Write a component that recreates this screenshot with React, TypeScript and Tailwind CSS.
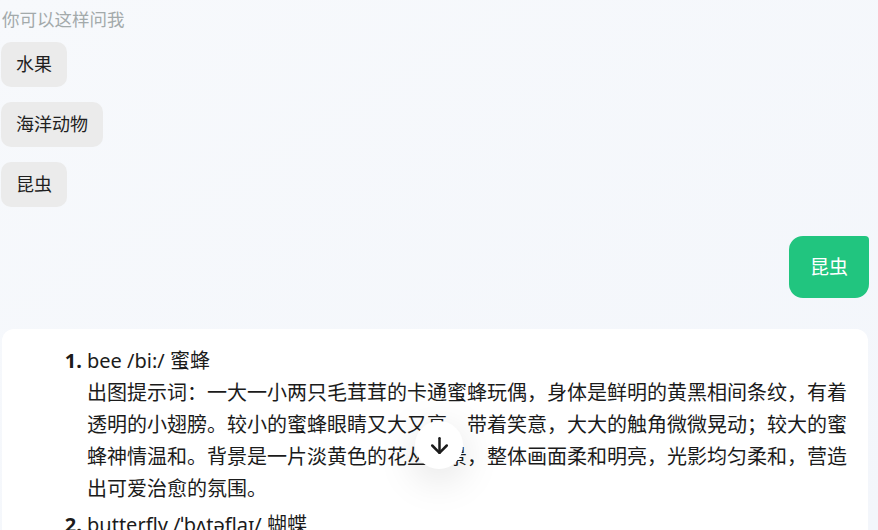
import React from 'react';
import { ArrowDown } from 'lucide-react';

const suggestions = ['水果', '海洋动物', '昆虫'];

const words = [
  {
    head: 'bee /bi:/ 蜜蜂',
    prompt:
      '出图提示词：一大一小两只毛茸茸的卡通蜜蜂玩偶，身体是鲜明的黄黑相间条纹，有着透明的小翅膀。较小的蜜蜂眼睛又大又亮，带着笑意，大大的触角微微晃动；较大的蜜蜂神情温和。背景是一片淡黄色的花丛背景，整体画面柔和明亮，光影均匀柔和，营造出可爱治愈的氛围。',
  },
  {
    head: 'butterfly /ˈbʌtəflaɪ/ 蝴蝶',
    prompt:
      '出图提示词：一只色彩斑斓的卡通蝴蝶，翅膀上有对称的花纹，停在一朵粉色的小花上。',
  },
];

export default function App() {
  return (
    <div
      className="relative w-[878px] h-[530px] overflow-hidden bg-gradient-to-br from-[#f7f9fc] to-[#f3f6fb] text-[#1b1b1b]"
      style={{ fontFamily: '"Noto Sans", "Noto Sans CJK SC", sans-serif' }}
    >
      {/* Suggestions */}
      <div className="pt-[7px] pl-[1px]">
        <p className="pl-[1px] text-[17.5px] leading-[24px] text-[#a3aaab]">你可以这样问我</p>
        <div className="mt-[11px] flex flex-col items-start gap-[15px]">
          {suggestions.map((s) => (
            <button
              key={s}
              className="h-[45px] px-[15px] rounded-[10px] bg-[#ebebeb] text-[18px] text-[#1f1f1f]"
            >
              {s}
            </button>
          ))}
        </div>
      </div>

      {/* User bubble */}
      <div className="flex justify-end pr-[9px] mt-[29px]">
        <div className="h-[62px] px-[21px] flex items-center rounded-[14px] rounded-tr-[4px] bg-[#21c57f] text-white text-[19px]">
          昆虫
        </div>
      </div>

      {/* Answer card */}
      <div className="mt-[31px] ml-[2px] w-[866px] bg-white rounded-[12px] pt-[16px] pl-[20px] pr-[18px] pb-6">
        <ol className="list-decimal pl-[65px] text-[20px] leading-[32px] marker:font-bold">
          {words.map((w) => (
            <li key={w.head} className="mb-[4px] pl-0">
              <div>{w.head}</div>
              <div>{w.prompt}</div>
            </li>
          ))}
        </ol>
      </div>

      {/* Scroll to bottom */}
      <button className="absolute left-[415px] top-[421px] w-[48px] h-[48px] rounded-full bg-white flex items-center justify-center shadow-[0_10px_40px_rgba(0,0,0,0.13)]">
        <ArrowDown size={25} strokeWidth={2.4} className="text-[#1b1b1b]" />
      </button>
    </div>
  );
}
